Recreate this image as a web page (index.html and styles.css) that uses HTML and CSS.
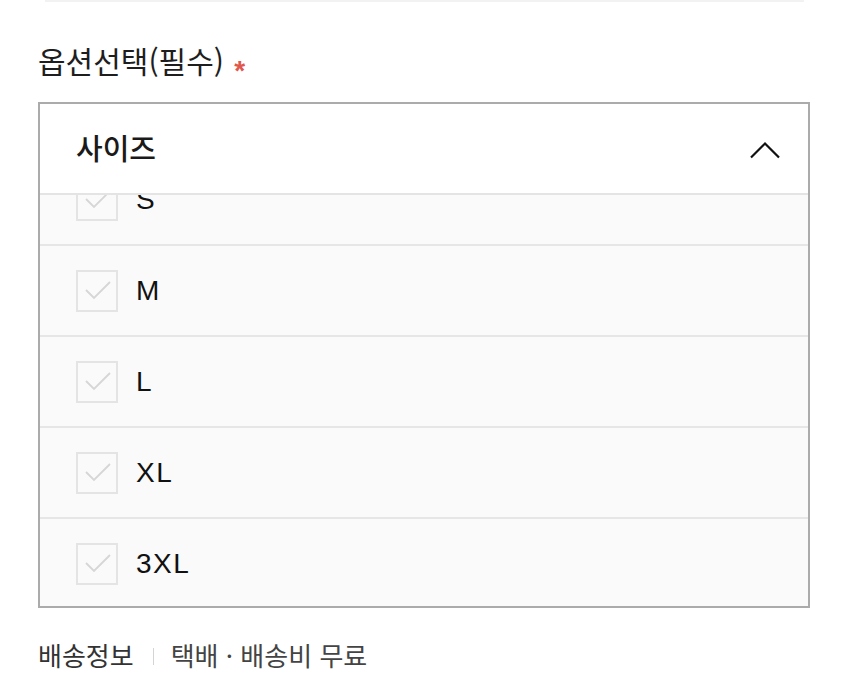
FILE: index.html
```html
<!DOCTYPE html>
<html lang="ko">
<head>
<meta charset="utf-8">
<title>옵션선택</title>
<link rel="stylesheet" href="styles.css">
</head>
<body>
<div class="page">
  <div class="topline"></div>
  <div class="label">옵션선택(필수) <span class="req">*</span></div>
  <div class="select">
    <div class="select-head">
      <span class="select-title">사이즈</span>
      <svg class="chevron" width="30" height="18" viewBox="0 0 30 18"><polyline points="1,16.5 15,2.5 29,16.5" fill="none" stroke="#111" stroke-width="2.2"/></svg>
    </div>
    <div class="options">
      <ul class="option-list">
        <li class="option"><span class="check"><svg width="38" height="38" viewBox="0 0 38 38"><polyline points="8,18 16,26 32,10" fill="none" stroke="#d6d6d6" stroke-width="1.8"/></svg></span><span class="opt-text">S</span></li>
        <li class="option"><span class="check"><svg width="38" height="38" viewBox="0 0 38 38"><polyline points="8,18 16,26 32,10" fill="none" stroke="#d6d6d6" stroke-width="1.8"/></svg></span><span class="opt-text">M</span></li>
        <li class="option"><span class="check"><svg width="38" height="38" viewBox="0 0 38 38"><polyline points="8,18 16,26 32,10" fill="none" stroke="#d6d6d6" stroke-width="1.8"/></svg></span><span class="opt-text">L</span></li>
        <li class="option"><span class="check"><svg width="38" height="38" viewBox="0 0 38 38"><polyline points="8,18 16,26 32,10" fill="none" stroke="#d6d6d6" stroke-width="1.8"/></svg></span><span class="opt-text">XL</span></li>
        <li class="option"><span class="check"><svg width="38" height="38" viewBox="0 0 38 38"><polyline points="8,18 16,26 32,10" fill="none" stroke="#d6d6d6" stroke-width="1.8"/></svg></span><span class="opt-text">3XL</span></li>
      </ul>
    </div>
  </div>
  <div class="ship">
    <span class="ship-title">배송정보</span>
    <span class="ship-sep"></span>
    <span class="ship-info">택배 · 배송비 무료</span>
  </div>
</div>
</body>
</html>
```
FILE: styles.css
```css
html, body {
  margin: 0;
  padding: 0;
  background: #fff;
}
body {
  font-family: "Noto Sans CJK KR", "Noto Sans", sans-serif;
  color: #222;
}
.page {
  padding: 0 39px 0 38px;
}
.topline {
  height: 2px;
  margin: 0 6px 0 7px;
  background: #f2f2f2;
}
.label {
  margin-top: 36px;
  height: 44px;
  font-size: 30px;
  line-height: 44px;
  color: #1e1e1e;
}
.req {
  font-family: "Liberation Sans", sans-serif;
  font-weight: bold;
  color: #e0584d;
  font-size: 28px;
  margin-left: 2px;
  vertical-align: -7px;
}
.select {
  margin-top: 20px;
  border: 2px solid #ababab;
  background: #fafafa;
}
.select-head {
  height: 89px;
  display: flex;
  align-items: center;
  justify-content: space-between;
  padding: 0 28px 0 36px;
  background: #fff;
  border-bottom: 2px solid #e4e4e4;
}
.select-title {
  font-size: 29px;
  font-weight: 500;
  color: #1a1a1a;
  margin-top: -3px;
}
.chevron {
  display: block;
  margin-top: 2px;
}
.options {
  height: 411px;
  overflow: hidden;
}
.option-list {
  list-style: none;
  margin: -40px 0 0 0;
  padding: 0;
}
.option {
  height: 89px;
  display: flex;
  align-items: center;
  padding-left: 36px;
  border-bottom: 2px solid #e6e6e6;
}
.check {
  width: 38px;
  height: 38px;
  border: 2px solid #e4e4e4;
  display: flex;
}
.opt-text {
  margin-left: 18px;
  font-family: "Liberation Sans", Arial, sans-serif;
  font-size: 28px;
  letter-spacing: 1.5px;
  color: #111;
}
.ship {
  margin-top: 29px;
  display: flex;
  align-items: center;
  font-size: 26px;
  line-height: 36px;
}
.ship-title {
  color: #333;
}
.ship-sep {
  width: 1px;
  height: 17px;
  background: #d4d4d4;
  margin: 2px 17px 0 19px;
}
.ship-info {
  color: #444;
}
```
